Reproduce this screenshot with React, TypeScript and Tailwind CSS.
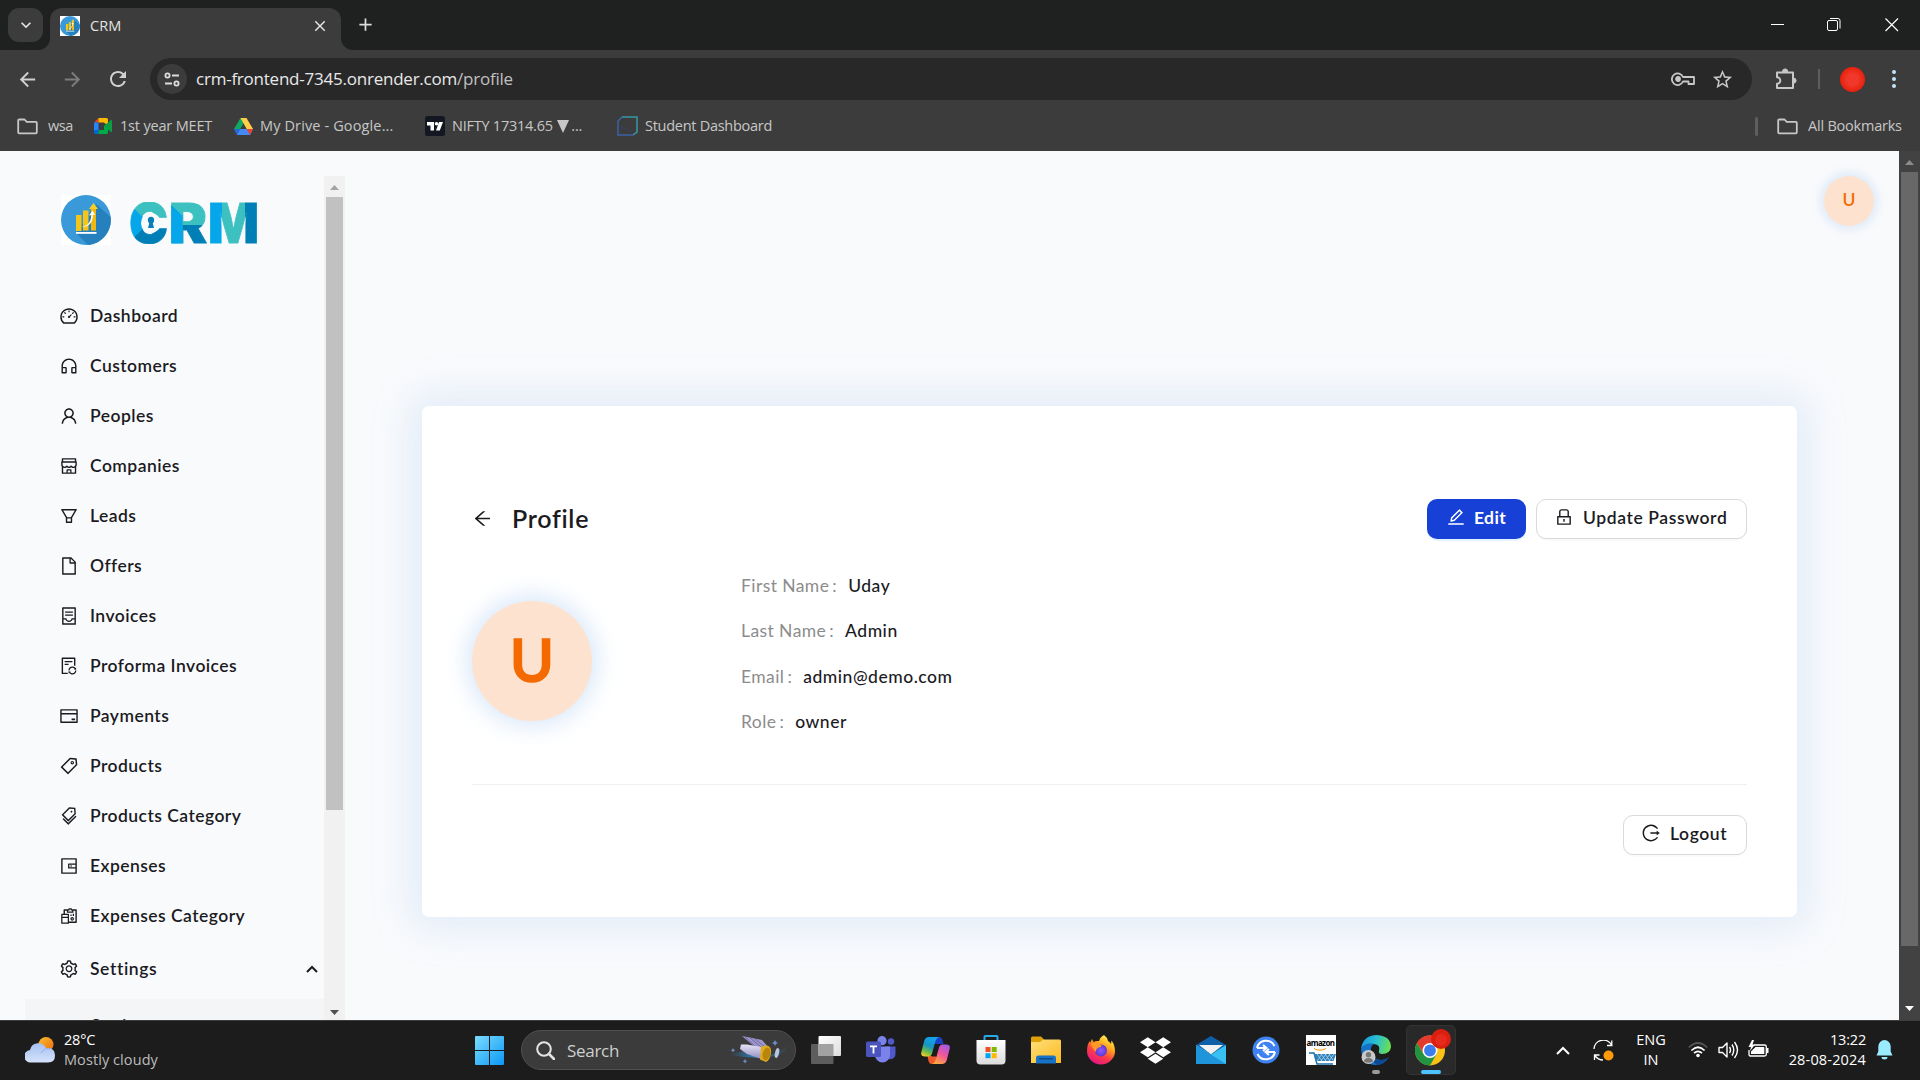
import React from "react";
import {
  AiOutlineArrowLeft,
  AiOutlineContainer,
  AiOutlineCreditCard,
  AiOutlineCustomerService,
  AiOutlineDashboard,
  AiOutlineEdit,
  AiOutlineFile,
  AiOutlineFileSync,
  AiOutlineFilter,
  AiOutlineLock,
  AiOutlineLogout,
  AiOutlineReconciliation,
  AiOutlineSetting,
  AiOutlineShop,
  AiOutlineTag,
  AiOutlineTags,
  AiOutlineUser,
  AiOutlineWallet,
} from "react-icons/ai";
import { FaDropbox } from "react-icons/fa";
import {
  MdArrowBack,
  MdArrowForward,
  MdClose,
  MdAdd,
  MdRefresh,
  MdStarOutline,
  MdKeyboardArrowDown,
} from "react-icons/md";

/* ---------- Brand mark ---------- */

function GrowthMark({ size }: { size: number }) {
  return (
    <svg width={size} height={size} viewBox="0 0 50 50" className="block shrink-0 bg-white">
      <circle cx="25" cy="25" r="25" fill="#3a99d8" />
      <path d="M35 9 L49.5 22 A25 25 0 0 1 27 50 L15 38 Z" fill="#2580bd" />
      <rect x="15" y="20" width="5.5" height="16" fill="#f5c518" />
      <rect x="22" y="15.500" width="5.500" height="20" fill="#f5c518" />
      <rect x="30" y="13" width="5" height="22.500" fill="#f1b90f" />
      <path d="M32.500 8 L37 14 H28 Z" fill="#f9cf24" />
      <path d="M20 31.500 C27 32 30 26 30.500 20 L28 20.500 L31.500 15.500 L34 20 L32 19.800 C32 27 28 33 20 31.500 Z" fill="#fff" />
      <rect x="15" y="37" width="20.500" height="1.800" fill="#fff" />
    </svg>
  );
}

function Wordmark() {
  return (
    <div className="relative flex h-[42px] w-[127px] items-center font-['Inter'] text-[55px] leading-[42px] font-black text-transparent [-webkit-text-stroke:0.8px_transparent]">
      <span className="w-[40px]">
        <span className="inline-block origin-left scale-x-[0.950] bg-[conic-gradient(from_0deg_at_50%_50%,#3cc0c0_0_25%,#007fb6_25%_63%,#05a7ea_63%_87%,#3cc0c0_87%)] bg-clip-text">C</span>
      </span>
      <span className="w-[39px]">
        <span className="inline-block origin-left scale-x-[1.040] bg-clip-text [background-color:#3cc0c0] [background-image:linear-gradient(45deg,#05a7ea_75%,transparent_75%),linear-gradient(#007fb6,#007fb6)] [background-position:0_0,100%_100%] [background-repeat:no-repeat] [background-size:36%_100%,64%_46%]">R</span>
      </span>
      <span className="w-[48px]">
        <span className="inline-block origin-left scale-x-[0.970] bg-[linear-gradient(90deg,#05a7ea_0_28%,#3cc0c0_28%_72%,#007fb6_72%)] bg-clip-text">M</span>
      </span>
      <svg className="absolute top-[11px] left-[12px]" width="20" height="20" viewBox="0 0 20 20">
        <circle cx="10" cy="10" r="10" fill="#f9fafc" />
        <path d="M7 8 a3.200 3.200 0 1 1 6 0 q0 1.500 -1.200 2.200 L13 15 H7 L8.200 10.200 Q7 9.500 7 8Z" fill="#087fb8" />
      </svg>
    </div>
  );
}

/* ---------- Browser frame ---------- */

function FolderIcon() {
  return (
    <svg width="21" height="17" viewBox="0 0 21 17" fill="none" stroke="#c7c7c7" strokeWidth="1.800" strokeLinejoin="round">
      <path d="M1.200 2.500 Q1.200 1.500 2.200 1.500 H7.500 L9.700 3.800 H18.800 Q19.800 3.800 19.800 4.800 V14.300 Q19.800 15.300 18.800 15.300 H2.200 Q1.200 15.300 1.200 14.300 Z" />
    </svg>
  );
}

function TabStrip() {
  return (
    <div className="flex h-[50px] shrink-0 bg-[#1f2120] pl-2">
      <button className="mt-2 flex h-[34px] w-[35px] items-center justify-center rounded-[11px] bg-[#3c3c3c] text-[20px] text-[#e3e3e3]">
        <MdKeyboardArrowDown />
      </button>
      <div className="relative mt-2 ml-[7px] flex h-[42px] w-[291px] items-center rounded-t-[12px] bg-[#3c3c3c] pb-[7px] pl-[10px]">
        <svg className="absolute bottom-0 left-[-12px]" width="12" height="12"><path d="M12 0 V12 H0 A12 12 0 0 0 12 0Z" fill="#3c3c3c" /></svg>
        <svg className="absolute right-[-12px] bottom-0" width="12" height="12"><path d="M0 0 V12 H12 A12 12 0 0 1 0 0Z" fill="#3c3c3c" /></svg>
        <GrowthMark size={20} />
        <span className="ml-[10px] w-[221px] text-[14.500px] tracking-[0.100px] text-[#e3e3e3]">CRM</span>
        <MdClose className="text-[18px] text-[#e3e3e3]" />
      </div>
      <MdAdd className="mt-[14px] ml-[14px] text-[21px] text-[#dcdcdc]" />
      <div className="mt-[18px] mr-[21px] ml-auto flex">
        <svg width="14" height="14"><path d="M0 6.500H13" stroke="#fff" /></svg>
        <svg className="ml-[42px]" width="14" height="14" fill="none" stroke="#fff"><rect x=".5" y="2.500" width="10" height="10" rx="1.500" /><path d="M3 .5 H11 Q13 .5 13 2.500 V10.500" /></svg>
        <svg className="ml-[44px]" width="14" height="14"><path d="M.5 .5 L13 13 M13 .5 L.5 13" stroke="#fff" strokeWidth="1.200" /></svg>
      </div>
    </div>
  );
}

function Toolbar() {
  return (
    <div className="flex h-[58px] shrink-0 items-center bg-[#3c3c3c] pl-[16px]">
      <MdArrowBack className="text-[23px] text-[#d0d0d0]" />
      <MdArrowForward className="ml-[22px] text-[23px] text-[#7c7c7c]" />
      <MdRefresh className="ml-[22px] text-[24px] text-[#d0d0d0]" />
      <div className="ml-[20px] flex h-[42px] w-[1602px] items-center rounded-full bg-[#282828] pl-[7px]">
        <div className="flex size-[30px] items-center justify-center rounded-full bg-[#3c3c3c]">
          <svg width="16" height="15" viewBox="0 0 16 15" fill="none" stroke="#dcdcdc" strokeWidth="1.800">
            <circle cx="3.500" cy="3.500" r="2.100" /><path d="M8 3.500H15 M1 11.500H8" /><circle cx="12.500" cy="11.500" r="2.100" />
          </svg>
        </div>
        <span className="ml-[9px] text-[17px] tracking-[-0.230px] whitespace-nowrap text-[#e8e8e8]">
          crm-frontend-7345.onrender.com<span className="text-[#c0c0c0]">/profile</span>
        </span>
        <svg className="ml-auto" width="24" height="14" viewBox="0 0 24 14" fill="none" stroke="#c7c7c7" strokeWidth="1.800">
          <path d="M12 5 H23 V12 H17.500 V9.500 H12 A5.800 5.800 0 1 1 12 5Z" strokeLinejoin="round" /><circle cx="7" cy="7" r="2" fill="#c7c7c7" />
        </svg>
        <MdStarOutline className="mr-[18px] ml-[16px] text-[23px] text-[#c7c7c7]" />
      </div>
      <svg className="ml-[23px]" width="23" height="23" viewBox="0 0 23 23">
        <path d="M2 4.500 H18 V20 H2 V15.800 A3.200 3.200 0 0 0 2 9.200 Z" fill="none" stroke="#c7c7c7" strokeWidth="2" strokeLinejoin="round" />
        <path d="M7.500 3.500 A2.600 2.600 0 0 1 12.700 3.500Z M18.500 10 A2.600 2.600 0 0 1 18.500 15.200Z" fill="#c7c7c7" stroke="#c7c7c7" />
      </svg>
      <div className="ml-[20px] h-5 w-[2px] bg-[#5e5e5e]" />
      <div className="ml-[20px] size-[25px] rounded-full bg-[radial-gradient(#f0392c_30%,#e8200c_70%,#c91100)]" />
      <div className="ml-[27px] flex flex-col gap-[3px]">
        <i className="size-[4px] rounded-full bg-[#c2e4fb]" />
        <i className="size-[4px] rounded-full bg-[#c2e4fb]" />
        <i className="size-[4px] rounded-full bg-[#c2e4fb]" />
      </div>
    </div>
  );
}

function Bookmarks() {
  return (
    <div className="flex h-[43px] shrink-0 items-center bg-[#3c3c3c] pb-[7px] pl-[17px] text-[14.500px] whitespace-nowrap text-[#c7c7c7]">
      <FolderIcon />
      <span className="ml-[10px] w-[46px] tracking-[-0.500px]">wsa</span>
      <svg width="18" height="16" viewBox="0 0 18 16">
        <path d="M0 4.500 L4.500 0 V4.500Z" fill="#ea4335" /><path d="M0 4.500H4.500V12H0Z" fill="#2684fc" /><path d="M0 12H4.500V16H1.500Q0 16 0 14.500Z" fill="#0066da" />
        <path d="M4.500 0H12.500Q14 0 14 1.500V8L10 4.500H4.500Z" fill="#ffba00" /><path d="M4.500 12H10V8L14 5V14.500Q14 16 12.500 16H4.500Z" fill="#00ac47" /><path d="M10 8L17 2Q18 1.500 18 2.800V13.200Q18 14.500 17 14Z" fill="#0a9d43" />
      </svg>
      <span className="ml-[8px] w-[114px] tracking-[-0.180px]">1st year MEET</span>
      <svg width="19" height="17" viewBox="0 0 19 17">
        <path d="M6.500 0H12.500L9.500 5.500L3.200 16L0 11Z" fill="#11a861" /><path d="M6.500 0H12.500L19 11H12.700Z" fill="#ffcf48" /><path d="M3.200 11H19L16 17H3Z" fill="#4688f4" /><path d="M3.200 11H6.500L3 17L0 11Z" fill="#2469d8" /><path d="M12.700 11H19L16 17Z" fill="#ea4335" />
      </svg>
      <span className="ml-[7px] w-[165px] tracking-[0.130px]">My Drive - Google...</span>
      <svg width="20" height="20" viewBox="0 0 20 20"><rect width="20" height="20" rx="2.500" fill="#131722" /><path d="M2 6H9V14.500H5.500V9.500H2Z M14 6H18L14.800 14.500H11Z" fill="#fff" /><circle cx="11.500" cy="7.800" r="1.800" fill="#fff" /></svg>
      <span className="ml-[7px] flex w-[165px] items-center tracking-[-0.240px]">NIFTY 17314.65&nbsp;<svg className="mr-[2px] ml-[1px]" width="12" height="14" viewBox="0 0 12 14"><path d="M0 1H12L6 14Z" fill="#c7c7c7" /></svg>...</span>
      <svg width="21" height="20" viewBox="0 0 21 20" fill="none" strokeWidth="1.500"><path d="M5 1H20V16L16 19" stroke="#3796a8" /><path d="M5 1L1 5V19H16" stroke="#3c62a5" /><path d="M4 10 l2 2 -2 2 M8 14 l3-3 M12 15h3" stroke="#34415f" /></svg>
      <span className="ml-[7px] tracking-[-0.270px]">Student Dashboard</span>
      <div className="ml-auto h-[19px] w-[3px] rounded bg-[#5e5e5e]" />
      <div className="ml-[19px]"><FolderIcon /></div>
      <span className="ml-[10px] w-[112px] tracking-[-0.220px]">All Bookmarks</span>
    </div>
  );
}

/* ---------- Page ---------- */

const NAV = [
  { label: "Dashboard", Icon: AiOutlineDashboard },
  { label: "Customers", Icon: AiOutlineCustomerService },
  { label: "Peoples", Icon: AiOutlineUser },
  { label: "Companies", Icon: AiOutlineShop },
  { label: "Leads", Icon: AiOutlineFilter },
  { label: "Offers", Icon: AiOutlineFile },
  { label: "Invoices", Icon: AiOutlineContainer },
  { label: "Proforma Invoices", Icon: AiOutlineFileSync },
  { label: "Payments", Icon: AiOutlineCreditCard },
  { label: "Products", Icon: AiOutlineTag },
  { label: "Products Category", Icon: AiOutlineTags },
  { label: "Expenses", Icon: AiOutlineWallet },
  { label: "Expenses Category", Icon: AiOutlineReconciliation },
];

function Triangle({ up, color }: { up?: boolean; color: string }) {
  return (
    <svg width="9" height="5" viewBox="0 0 9 5" className="block">
      <path d={up ? "M0 5 L4.500 0 L9 5Z" : "M0 0 L4.500 5 L9 0Z"} fill={color} />
    </svg>
  );
}

function Sidebar() {
  return (
    <aside className="mt-[25px] ml-[25px] flex w-[320px] shrink-0 overflow-hidden">
      <div className="w-[299px] overflow-hidden">
        <div className="flex h-[115px] items-start pt-[19px] pl-[36px]">
          <GrowthMark size={50} />
          <div className="mt-[7px] ml-[18px]"><Wordmark /></div>
        </div>
        <nav className="text-[17.500px] font-semibold text-[#1b1b1f]">
          {NAV.map(({ label, Icon }) => (
            <div key={label} className="flex h-[50px] items-center pl-[34px]">
              <Icon className="size-[20px]" />
              <span className="ml-[11px] tracking-[0.450px]">{label}</span>
            </div>
          ))}
          <div className="mt-[3px] flex h-[50px] items-center pl-[34px]">
            <AiOutlineSetting className="size-[20px]" />
            <span className="ml-[11px] tracking-[0.600px]">Settings</span>
            <svg className="mr-[6px] ml-auto" width="12" height="8" viewBox="0 0 12 8" fill="none" stroke="#1b1b1f" strokeWidth="2"><path d="M1 7L6 2L11 7" /></svg>
          </div>
          <div className="mt-[5px] h-[50px] bg-[#f4f5f6] pt-[16px] pl-[66px] leading-[22px]">Settings</div>
        </nav>
      </div>
      <div className="flex w-[21px] flex-col items-center bg-[#f1f1f1] pt-[9px] pb-[5px]">
        <Triangle up color="#a3a3a3" />
        <div className="mt-[7px] h-[613px] w-[17px] shrink-0 bg-[#c1c1c1]" />
        <div className="mt-auto"><Triangle color="#505050" /></div>
      </div>
    </aside>
  );
}

const FIELDS = [
  { label: "First Name", value: "Uday" },
  { label: "Last Name", value: "Admin" },
  { label: "Email", value: "admin@demo.com" },
  { label: "Role", value: "owner" },
];

function OutlineButton({ icon, label, className }: { icon: React.ReactNode; label: string; className: string }) {
  return (
    <button className={"flex h-10 items-center rounded-[10px] border border-[#d9d9d9] bg-white pb-[2px] text-[17.500px] font-semibold shadow-[0_2px_0_rgba(0,0,0,0.02)] " + className}>
      <span className="mb-[2px] text-[20px]">{icon}</span>
      <span className="ml-[9px] tracking-[0.600px] whitespace-nowrap">{label}</span>
    </button>
  );
}

function ProfileCard() {
  return (
    <section className="mt-[255px] ml-[77px] h-[511px] w-[1375px] rounded-[7px] bg-white px-[50px] pt-[93px] text-[#1b1b1f] shadow-[0_0_38px_12px_rgba(150,190,238,0.220)]">
      <header className="flex h-10 items-center">
        <AiOutlineArrowLeft className="mb-[2px] size-[21px]" />
        <h1 className="mb-[1px] ml-[19px] text-[25px] font-semibold tracking-[0.700px]">Profile</h1>
        <button className="ml-auto flex h-10 w-[99px] items-center rounded-[10px] bg-[#1640d6] pb-[2px] pl-[19px] text-[17.500px] font-bold text-white shadow-[0_2px_0_rgba(5,128,255,0.100)]">
          <AiOutlineEdit className="mb-[2px] size-[20px]" />
          <span className="ml-[8px] tracking-[0.350px]">Edit</span>
        </button>
        <OutlineButton className="ml-[10px] w-[211px] pl-[17px]" icon={<AiOutlineLock />} label="Update Password" />
      </header>
      <div className="mt-[24px] flex h-[222px] border-b border-[#efefef]">
        <div className="mt-[38px] flex size-[120px] items-center justify-center rounded-full bg-[#fde3cf] pb-[4px] text-[60px] font-semibold text-[#f56a00] shadow-[0_0_24px_4px_rgba(150,190,238,0.400)] [-webkit-text-stroke:1.500px_#f56a00]">
          U
        </div>
        <dl className="ml-[149px] text-[17.500px]">
          {FIELDS.map(({ label, value }) => (
            <div key={label} className="flex h-[45.600px] items-center">
              <dt className="tracking-[0.420px] text-[#8c8c8c]">{label}<span className="ml-[3px]">:</span></dt>
              <dd className="ml-[11px] font-medium tracking-[0.520px]">{value}</dd>
            </div>
          ))}
        </dl>
      </div>
      <div className="mt-[30px] flex justify-end">
        <OutlineButton className="w-[124px] pl-[17px]" icon={<AiOutlineLogout />} label="Logout" />
      </div>
    </section>
  );
}

function Page() {
  return (
    <main className="flex h-[869px] shrink-0 overflow-hidden bg-[#f9fafc] font-['Lato',sans-serif]">
      <Sidebar />
      <ProfileCard />
      <div className="mt-[25px] ml-[27px] flex size-[50px] shrink-0 items-center justify-center rounded-full bg-[#fde3cf] pb-[2px] text-[17.500px] font-semibold text-[#f56a00] shadow-[0_0_12px_2px_rgba(150,190,238,0.350)]">
        U
      </div>
      <div className="ml-auto flex w-[21px] flex-col items-center bg-[#424242] pt-[9px] pb-[9px]">
        <Triangle up color="#8b8b8b" />
        <div className="mt-[7px] h-[774px] w-[17px] shrink-0 bg-[#686868]" />
        <div className="mt-auto"><Triangle color="#fff" /></div>
      </div>
    </main>
  );
}

/* ---------- Taskbar ---------- */

function Slot({ children }: { children: React.ReactNode }) {
  return <div className="flex h-[50px] w-[55px] shrink-0 items-center justify-center">{children}</div>;
}

function TelescopeArt() {
  return (
    <svg width="60" height="30" viewBox="0 0 60 30">
      <defs>
        <linearGradient id="trail" x1="0" x2="1"><stop offset="0" stopColor="#2a6d9c" stopOpacity="0" /><stop offset=".4" stopColor="#2f7fb5" /><stop offset="1" stopColor="#2a6d9c" stopOpacity="0" /></linearGradient>
        <linearGradient id="tube" x1="0" y1="0" x2="0" y2="1"><stop offset="0" stopColor="#e6e2f8" /><stop offset="1" stopColor="#8d87b8" /></linearGradient>
      </defs>
      <path d="M0 20 Q18 12 30 18 T60 9 Q56 20 40 22 Q20 24 0 20Z" fill="url(#trail)" />
      <path d="M12 1 L32 5 L39 13 L26 13Z" fill="#9d97cc" /><path d="M14 1 L26 12 M19 2 L31 12 M25 4 L35 12" stroke="#6f6aa0" />
      <path d="M11 9.500 L17 9.500 L34 12.500 V25 L17 19 L10 14Z" fill="url(#tube)" />
      <path d="M31 11.500 L37 10.500 Q42 12 41 18 Q40 25 36 27 L30 24.500Z" fill="#e0ab1e" /><ellipse cx="36.500" cy="19" rx="3.800" ry="6.500" fill="#b9850c" transform="rotate(14 36.500 19)" />
      <ellipse cx="47" cy="18" rx="2" ry="5" fill="#b4c9df" transform="rotate(14 47 18)" />
      <path d="M45 5l1 2 2 1-2 1-1 2-1-2-2-1 2-1Z M15 24l.8 1.500 1.500 .8-1.500 .8-.8 1.500-.8-1.500-1.500-.8 1.500-.8Z M3 13l.8 1.500 1.500 .8-1.500 .8-.8 1.500-.8-1.500-1.500-.8 1.500-.8Z" fill="#6d8fc9" />
    </svg>
  );
}

function TaskViewIcon() {
  return (
    <svg width="30" height="28" viewBox="0 0 30 28">
      <defs><linearGradient id="tv" x1="0" y1="0" x2="1" y2="1"><stop stopColor="#fff" /><stop offset="1" stopColor="#dcdcdc" /></linearGradient></defs>
      <rect y="8" width="22.500" height="20" rx="1" fill="#5d5d5d" /><rect x="7.500" width="22.500" height="20" rx="1" fill="url(#tv)" /><rect x="7.500" y="8" width="15" height="12" fill="#a2a2a2" />
    </svg>
  );
}

function TeamsIcon() {
  return (
    <svg width="30" height="28" viewBox="0 0 30 28">
      <circle cx="25" cy="5.500" r="3.200" fill="#5059c9" /><path d="M19 10.500H29.500V18A5.500 5.500 0 0 1 19 20Z" fill="#5059c9" />
      <circle cx="16" cy="4.700" r="4.600" fill="#7b83eb" /><path d="M9 10.500H24V19A7.500 7.500 0 0 1 9 19Z" fill="#7b83eb" />
      <rect y="5.500" width="15" height="15.500" rx="1.500" fill="#4b53bc" /><path d="M4 9.500H11V11.300H8.400V17.500H6.600V11.300H4Z" fill="#fff" />
    </svg>
  );
}

function CopilotIcon() {
  return (
    <svg width="29" height="27" viewBox="0 0 29 27">
      <defs>
        <linearGradient id="cpa" x1=".6" y1="0" x2=".2" y2="1"><stop stopColor="#12a5ef" /><stop offset=".45" stopColor="#1694c4" /><stop offset=".75" stopColor="#6dbb4a" /><stop offset="1" stopColor="#f6cf2b" /></linearGradient>
        <linearGradient id="cpb" x1=".8" y1="0" x2=".3" y2="1"><stop stopColor="#a25be8" /><stop offset=".5" stopColor="#f0559b" /><stop offset="1" stopColor="#ffa83f" /></linearGradient>
      </defs>
      <path d="M12 0H18.500Q20.500 0 21.300 2.500L22.500 7H14Z" fill="#1c3fc2" /><path d="M17 27H10.500Q8.500 27 7.700 24.500L6.500 19H15Z" fill="#f05a2b" />
      <path d="M8 0H18Q15.500 .8 14.500 4L11 16.500Q10 19.500 7.500 19.500H4Q-.8 19.500 .4 15L3.200 4Q4.300 0 8 0Z" fill="url(#cpa)" />
      <path d="M21 27H11Q13.500 26.200 14.500 23L18 10.500Q19 7.500 21.500 7.500H25Q29.800 7.500 28.600 12L25.800 23Q24.700 27 21 27Z" fill="url(#cpb)" />
      <path d="M15 7H18.700Q18 8.500 17.500 10.500L15 19.500H10.600Q11.500 17.500 12 16Z" fill="#1c1c1c" />
    </svg>
  );
}

function StoreIcon() {
  return (
    <svg width="30" height="30" viewBox="0 0 30 30">
      <defs><linearGradient id="st" x1="0" y1="0" x2="0" y2="1"><stop stopColor="#fff" /><stop offset="1" stopColor="#dcdcdc" /></linearGradient></defs>
      <path d="M8.500 6V1.800Q8.500 1 9.300 1H20.700Q21.500 1 21.500 1.800V6" fill="none" stroke="#29a8e8" strokeWidth="2" />
      <path d="M.5 5H29.500V25.500Q29.500 29.500 25.500 29.500H4.500Q.5 29.500 .5 25.500Z" fill="url(#st)" />
      <path d="M9.500 12H14.500V17H9.500Z" fill="#f25022" /><path d="M15.700 12H20.700V17H15.700Z" fill="#7fba00" /><path d="M9.500 18.200H14.500V23.200H9.500Z" fill="#00a4ef" /><path d="M15.700 18.200H20.700V23.200H15.700Z" fill="#ffb900" />
    </svg>
  );
}

function ExplorerIcon() {
  return (
    <svg width="30" height="28" viewBox="0 0 30 28">
      <defs><linearGradient id="fo" x1="0" y1="0" x2="1" y2="1"><stop stopColor="#ffe07a" /><stop offset="1" stopColor="#fbba22" /></linearGradient></defs>
      <path d="M0 2Q0 .5 1.500 .5H10L13 3.500V10H0Z" fill="#e0a106" /><path d="M0 6H9L12.500 3.500H28.500Q30 3.500 30 5V27H0Z" fill="url(#fo)" />
      <path d="M5 27.500V22Q5 19.500 7.500 19.500H22.500Q25 19.500 25 22V27.500Z" fill="#1673c5" /><rect x="8" y="22" width="14" height="1.500" rx=".7" fill="#0e4d8c" />
    </svg>
  );
}

function FirefoxIcon() {
  return (
    <svg width="30" height="30" viewBox="0 0 30 30">
      <defs>
        <linearGradient id="ff" x1=".8" y1=".05" x2=".3" y2="1"><stop stopColor="#fff44f" /><stop offset=".35" stopColor="#ffa21c" /><stop offset=".65" stopColor="#ff3b47" /><stop offset="1" stopColor="#e31587" /></linearGradient>
        <radialGradient id="fg"><stop stopColor="#9059ff" /><stop offset="1" stopColor="#5b3ad0" /></radialGradient>
      </defs>
      <path d="M18 0Q21 2 22 6Q24 7 25 9L25.500 5.500Q29 10 29 16A14 13.500 0 0 1 1 16Q1 9 4 6V8L6 4L7.500 7Q10 5.500 13 6Q14 2 18 0Z" fill="url(#ff)" />
      <circle cx="15" cy="15.500" r="6" fill="url(#fg)" /><path d="M5 9Q8 6.500 12 9.500L16 10Q15 12.500 12 12.800Q10 14 9.500 17Q7 14 5 9Z" fill="#ff9a26" />
    </svg>
  );
}

function MailIcon() {
  return (
    <svg width="30" height="28" viewBox="0 0 30 28">
      <path d="M0 9L15 0L30 9V16H0Z" fill="#0f5fa8" /><path d="M3 9H27L15 18.500Z" fill="#f1f1f1" />
      <path d="M0 9L15 18.500L30 9V28H0Z" fill="#39c0f2" /><path d="M0 9L30 28H0Z" fill="#1f95dc" />
    </svg>
  );
}

function SyncRoundIcon() {
  return (
    <svg width="28" height="28" viewBox="0 0 28 28" fill="none" stroke="#fff" strokeWidth="2">
      <circle cx="14" cy="14" r="13.500" fill="#3f82f2" stroke="none" /><path d="M5 12A9.300 9.300 0 0 1 22.500 10 M23 16A9.300 9.300 0 0 1 5.500 18" /><path d="M5 12H14 M11 9L14.500 12L11 15 M23 16H14 M17 13L13.500 16L17 19" />
    </svg>
  );
}

function AmazonIcon() {
  return (
    <div className="flex size-[30px] flex-col items-center overflow-hidden bg-white">
      <span className="mt-[3px] font-['Noto_Sans'] text-[8px] leading-[10px] font-bold tracking-[-0.600px] text-black">amazon</span>
      <svg width="30" height="17" viewBox="0 0 30 17">
        <path d="M8 .5Q14 4 20 .5" stroke="#ff9900" fill="none" /><path d="M3 5H8L11 16H27" stroke="#1c6fa8" fill="none" strokeWidth="1.500" />
        <path d="M8 6H30L27.500 13H10Z" fill="#2d80b9" /><path d="M11 6L16 13M15 6L20 13M19 6L24 13M23 6L27 12M16 6L11 13M20 6L15 13M24 6L19 13M28 6L23 13" stroke="#b8d6ea" strokeWidth=".8" />
      </svg>
    </div>
  );
}

function EdgeIcon() {
  return (
    <svg width="30" height="30" viewBox="0 0 30 30">
      <defs><linearGradient id="ea" x1="0" y1=".3" x2="1" y2=".5"><stop stopColor="#1697df" /><stop offset=".5" stopColor="#2ac0cf" /><stop offset="1" stopColor="#6be04f" /></linearGradient></defs>
      <path d="M0 14Q2 0 16 0Q30 1 30 12Q29 19 21 19Q17 18.500 18 16Q20 10 13 9Q4 8 0 14Z" fill="url(#ea)" />
      <path d="M0 14Q5 7 13 9Q9 11 10 17Q12 25 21 25Q25 25 28 22Q23 30 14 30Q1 29 0 14Z" fill="#1473c8" /><path d="M10 15Q10 25 21 25Q25 25 28 22Q24 29 17 30Q8 27 10 15Z" fill="#0c4a94" />
      <circle cx="7.500" cy="22" r="7" fill="#c9c9c9" /><circle cx="7.500" cy="19.700" r="2.700" fill="#777" /><path d="M3 26.500Q3 23 7.500 23T12 26.500Q7.500 29 3 26.500Z" fill="#777" />
    </svg>
  );
}

function ChromeIcon() {
  return (
    <svg width="36" height="37" viewBox="0 0 36 37">
      <circle cx="15" cy="21.500" r="15" fill="#fbc116" /><path d="M15 21.500L2 14A15 15 0 0 1 28 14Z" fill="#e33b2e" /><path d="M15 14H28A15 15 0 0 0 2 14L8.500 25Z" fill="#e33b2e" />
      <path d="M2 14A15 15 0 0 0 15 36.500L21.500 25.250L8.500 25.250Z" fill="#229342" /><circle cx="15" cy="21.500" r="7.500" fill="#fff" /><circle cx="15" cy="21.500" r="5.900" fill="#3b7ded" />
      <circle cx="26" cy="10" r="10" fill="#d81f10" /><circle cx="26" cy="11" r="6" fill="#e62a1b" />
    </svg>
  );
}

function Taskbar() {
  return (
    <footer className="flex h-[60px] shrink-0 items-center border-t border-[#3d3d3d] bg-[#1c1c1c] pb-[1px] text-[14.500px] text-white">
      <div className="flex w-[462px] items-center pl-[25px]">
        <svg width="30" height="26" viewBox="0 0 30 26">
          <defs><linearGradient id="cl" x1="0" y1="0" x2="0" y2="1"><stop stopColor="#a5c0f2" /><stop offset="1" stopColor="#d5e2fa" /></linearGradient><linearGradient id="su" x1="0" y1="0" x2="1" y2="1"><stop stopColor="#f9bf2c" /><stop offset="1" stopColor="#ec6a12" /></linearGradient></defs>
          <circle cx="21" cy="7.500" r="7.500" fill="url(#su)" /><path d="M6 25.500A6 6 0 0 1 5 13A8.500 8.500 0 0 1 21 11Q30 10 30 18.500Q30 25.500 23 25.500Z" fill="url(#cl)" /><path d="M16 16Q20 10 26 12" stroke="#8cacea" fill="none" />
        </svg>
        <div className="ml-[9px] leading-[20px]"><div className="tracking-[-0.200px]">28°C</div><div className="tracking-[0.080px] text-[#bcbcbc]">Mostly cloudy</div></div>
      </div>
      <Slot>
        <svg width="29" height="29" viewBox="0 0 29 29"><defs><linearGradient id="wi" x1="0" y1="0" x2="1" y2="1"><stop stopColor="#7cdcff" /><stop offset="1" stopColor="#0a98f5" /></linearGradient></defs><path d="M0 1Q0 0 1 0H14V14H0Z M15 0H28Q29 0 29 1V14H15Z M0 15H14V29H1Q0 29 0 28Z M15 15H29V28Q29 29 28 29H15Z" fill="url(#wi)" /></svg>
      </Slot>
      <div className="ml-[4px] flex h-10 w-[275px] shrink-0 items-center rounded-full border border-[#505050] bg-[#3b3b3b] pl-[14px]">
        <svg width="19" height="19" viewBox="0 0 19 19" fill="none" stroke="#e4e4e4" strokeWidth="2"><circle cx="8" cy="8" r="6.800" /><path d="M13 13L18 18" strokeLinecap="round" strokeWidth="2.500" /></svg>
        <span className="mt-[1px] ml-[12px] text-[17px] tracking-[-0.300px] text-[#cfcfcf]">Search</span>
        <div className="mr-[5px] ml-auto"><TelescopeArt /></div>
      </div>
      <div className="ml-[2px] flex">
        <Slot><TaskViewIcon /></Slot>
        <Slot><TeamsIcon /></Slot>
        <Slot><CopilotIcon /></Slot>
        <Slot><StoreIcon /></Slot>
        <Slot><ExplorerIcon /></Slot>
        <Slot><FirefoxIcon /></Slot>
        <Slot><FaDropbox className="size-[31px]" /></Slot>
        <Slot><MailIcon /></Slot>
        <Slot><SyncRoundIcon /></Slot>
        <Slot><AmazonIcon /></Slot>
        <Slot>
          <div className="relative"><EdgeIcon /><i className="absolute top-[35px] left-[11px] h-1 w-2 rounded-full bg-[#9a9a9a]" /></div>
        </Slot>
        <Slot>
          <div className="relative flex size-[50px] justify-center rounded-[5px] border border-[#333] bg-[#292929] pt-[3px] pl-[5px]">
            <ChromeIcon /><i className="absolute bottom-0 left-[14px] h-1 w-5 rounded-full bg-[#4cc2ff]" />
          </div>
        </Slot>
      </div>
      <div className="ml-auto flex items-center">
        <svg width="14" height="9" viewBox="0 0 14 9" fill="none" stroke="#fff" strokeWidth="2"><path d="M1 8L7 2L13 8" /></svg>
        <svg className="ml-[23px]" width="21" height="21" viewBox="0 0 21 21" fill="none" stroke="#fff" strokeWidth="1.300">
          <path d="M1 9A9.300 9.300 0 0 1 18.500 5 M18.800 .5V5.500H14 M1.500 20V15H6.500 M1.800 15.500Q5 20 10 20" /><circle cx="15.500" cy="15.500" r="5" fill="#ff9a0c" stroke="none" />
        </svg>
        <div className="ml-[18px] w-[38px] text-center leading-[20px]"><div>ENG</div><div>IN</div></div>
        <svg className="ml-[18px]" width="20" height="16" viewBox="0 0 20 16" fill="none" strokeWidth="1.700">
          <path d="M.8 5.500Q10-3.500 19.200 5.500" stroke="#555" /><path d="M3.400 8.500Q10 2 16.600 8.500 M6 11.200Q10 7.500 14 11.200" stroke="#fff" /><circle cx="10" cy="13.500" r="1.800" fill="#fff" />
        </svg>
        <svg className="ml-[10px]" width="21" height="18" viewBox="0 0 21 18" fill="none" stroke="#fff" strokeWidth="1.400"><path d="M1 6.500H4.500L9 2V16L4.500 11.500H1Z" strokeLinejoin="round" /><path d="M11.500 6Q13.500 9 11.500 12 M14 3.500Q17.500 9 14 14.500 M16.500 1Q22.500 9 16.500 17" /></svg>
        <svg className="mb-[3px] ml-[9px]" width="21" height="17" viewBox="0 0 21 17"><path d="M6 5H16.500Q18.300 5 18.300 6.500V14.500Q18.300 16 16.500 16H3Q1 16 1 14.500V10" fill="none" stroke="#fff" strokeWidth="1.300" /><path d="M7.500 7H15.500Q16.300 7 16.300 7.800V14H3V11.500Z M18.500 8H20.500V13H18.500Z M4 0L.5 7H3L2 11L7 4.500H4.500L6 0Z" fill="#fff" /></svg>
        <div className="ml-[14px] w-[83px] text-right leading-[20px]"><div className="tracking-[-0.200px]">13:22</div><div className="tracking-[0.170px]">28-08-2024</div></div>
        <svg className="mr-[27px] ml-[10px]" width="17" height="20" viewBox="0 0 17 20"><path d="M8.500 0A6.200 6.500 0 0 1 14.700 6.500V11.500L16.500 15.500H.5L2.300 11.500V6.500A6.200 6.500 0 0 1 8.500 0Z M5.500 17H11.500A3 2.500 0 0 1 5.500 17Z" fill="#99ebff" /></svg>
      </div>
    </footer>
  );
}

export default function App() {
  return (
    <div className="flex h-[1080px] w-[1920px] flex-col overflow-hidden bg-[#1f2120] font-['Open_Sans',sans-serif]">
      <TabStrip />
      <Toolbar />
      <Bookmarks />
      <Page />
      <Taskbar />
    </div>
  );
}
